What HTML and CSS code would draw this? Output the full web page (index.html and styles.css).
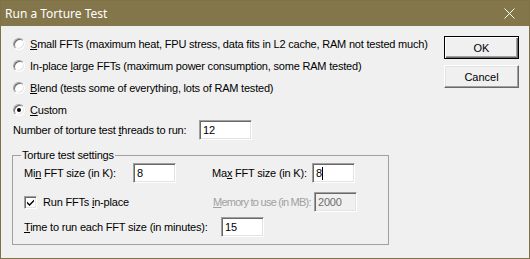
FILE: index.html
```html
<!DOCTYPE html>
<html>
<head>
  <meta charset="UTF-8">
  <title>Run a Torture Test</title>
  <link rel="stylesheet" href="styles.css">
</head>
<body>
  <div class="window">
    <div class="titlebar">
      <span class="title">Run a Torture Test</span>
      <svg class="close" width="11" height="11" viewBox="0 0 11 11">
        <path d="M0.5 0.5 L10.5 10.5 M10.5 0.5 L0.5 10.5" stroke="#fff" stroke-width="1" fill="none"/>
      </svg>
    </div>

    <div class="client">
      <div class="main">
        <label class="radio-row"><span class="radio"></span><span><u>S</u>mall FFTs (maximum heat, FPU stress, data fits in L2 cache, RAM not tested much)</span></label>
        <label class="radio-row"><span class="radio"></span><span>In-place <u>l</u>arge FFTs (maximum power consumption, some RAM tested)</span></label>
        <label class="radio-row"><span class="radio"></span><span><u>B</u>lend (tests some of everything, lots of RAM tested)</span></label>
        <label class="radio-row last"><span class="radio checked"></span><span><u>C</u>ustom</span></label>

        <div class="field-row threads">
          <span class="lbl threads-lbl">Number of torture test <u>t</u>hreads to run:</span>
          <span class="edit w53">12</span>
        </div>

        <fieldset class="group">
          <legend>Torture test settings</legend>

          <div class="field-row first">
            <span class="lbl min-lbl">Mi<u>n</u> FFT size (in K):</span>
            <span class="edit w43">8</span>
            <span class="lbl max-lbl">Ma<u>x</u> FFT size (in K):</span>
            <span class="edit w43">8<span class="caret"></span></span>
          </div>

          <div class="field-row second">
            <span class="check-wrap">
              <span class="checkbox">
                <svg width="9" height="9" viewBox="0 0 9 9"><path d="M1 3.5 L3.5 6 L8 1.5 L8 3.5 L3.5 8 L1 5.5 Z" fill="#000"/></svg>
              </span>
              <span>Run FFTs <u>i</u>n-place</span>
            </span>
            <span class="lbl mem-lbl disabled"><u>M</u>emory to use (in MB):</span>
            <span class="edit w43 off">2000</span>
          </div>

          <div class="field-row third">
            <span class="lbl time-lbl"><u>T</u>ime to run each FFT size (in minutes):</span>
            <span class="edit w43">15</span>
          </div>
        </fieldset>
      </div>

      <div class="buttons">
        <button class="btn default">OK</button>
        <button class="btn">Cancel</button>
      </div>
    </div>
  </div>
</body>
</html>
```

FILE: styles.css
```css
body {
  margin: 0;
  background-color: #f0f0f0;
  font-family: "Liberation Sans", Arial, sans-serif;
  font-size: 11px;
  letter-spacing: -0.2px;
  color: #000;
}
u {
  text-decoration: underline;
  text-underline-offset: 1px;
}
.window {
  width: 530px;
  height: 259px;
  box-sizing: border-box;
  border: 1px solid #7f7247;
  background-color: #f0f0f0;
  display: flex;
  flex-direction: column;
}
.titlebar {
  height: 25px;
  background-color: #83764a;
  display: flex;
  align-items: center;
  justify-content: space-between;
  padding: 0 14px 0 4px;
}
.title {
  font-family: "Noto Sans", sans-serif;
  font-size: 12px;
  letter-spacing: 0;
  color: #fff;
}
.client {
  flex: 1;
  display: flex;
}
.main {
  flex: 1;
  padding: 7px 0 0 12px;
  white-space: nowrap;
}
.radio-row {
  display: flex;
  align-items: center;
  height: 22px;
}
.radio-row.last {
  height: 21px;
}
.radio {
  width: 12px;
  height: 12px;
  box-sizing: border-box;
  border-radius: 50%;
  border: 1px solid;
  border-color: #a0a0a0 #fff #fff #a0a0a0;
  box-shadow: inset 1px 1px 0 #696969, inset -1px -1px 0 #e3e3e3;
  background-color: #fff;
  margin-right: 5px;
  display: flex;
  align-items: center;
  justify-content: center;
}
.radio.checked::after {
  content: "";
  width: 4px;
  height: 4px;
  border-radius: 50%;
  background-color: #000;
}
.field-row {
  display: flex;
  align-items: center;
  height: 20px;
}
.lbl {
  flex-shrink: 0;
}
.threads-lbl {
  width: 186px;
}
.edit {
  flex-shrink: 0;
  height: 20px;
  box-sizing: border-box;
  border: 1px solid;
  border-color: #a0a0a0 #fff #fff #a0a0a0;
  box-shadow: inset 1px 1px 0 #696969, inset -1px -1px 0 #e3e3e3;
  background-color: #fff;
  padding: 3px 0 0 3px;
  line-height: 13px;
  display: flex;
  align-items: flex-start;
}
.edit.off {
  background-color: #f0f0f0;
  color: #6d6d6d;
}
.w53 { width: 53px; }
.w43 { width: 43px; }
.caret {
  width: 1px;
  height: 13px;
  background-color: #000;
}
.group {
  margin: 9px 0 0 -1px;
  width: 377px;
  box-sizing: border-box;
  border: 1px solid #a0a0a0;
  padding: 0 0 7px 11px;
}
.group legend {
  padding: 0 1px;
  margin-left: -3px;
  line-height: 13px;
}
.group .first {
  margin-top: 1px;
}
.group .second {
  margin-top: 9px;
}
.group .third {
  margin-top: 5px;
}
.min-lbl {
  width: 109px;
}
.max-lbl {
  width: 100px;
  margin-left: 36px;
}
.check-wrap {
  display: flex;
  align-items: center;
  width: 189px;
}
.checkbox {
  width: 13px;
  height: 13px;
  box-sizing: border-box;
  border: 1px solid;
  border-color: #a0a0a0 #fff #fff #a0a0a0;
  box-shadow: inset 1px 1px 0 #696969, inset -1px -1px 0 #e3e3e3;
  background-color: #fff;
  margin-right: 6px;
  display: flex;
  align-items: center;
  justify-content: center;
}
.mem-lbl {
  width: 101px;
  letter-spacing: -0.75px;
}
.disabled {
  color: #a0a0a0;
}
.time-lbl {
  width: 197px;
}
.buttons {
  width: 75px;
  margin-right: 10px;
  padding-top: 10px;
  display: flex;
  flex-direction: column;
  gap: 6px;
}
.btn {
  width: 75px;
  height: 23px;
  box-sizing: border-box;
  font-family: "Liberation Sans", Arial, sans-serif;
  font-size: 11px;
  color: #000;
  background-color: #f0f0f0;
  border: 1px solid;
  border-color: #fff #696969 #696969 #fff;
  box-shadow: inset -1px -1px 0 #a0a0a0, inset 1px 1px 0 #e3e3e3;
  padding: 0;
}
.btn.default {
  border: 1px solid #000;
  box-shadow: inset 1px 1px 0 #fff, inset -1px -1px 0 #696969, inset -2px -2px 0 #a0a0a0;
}
```
